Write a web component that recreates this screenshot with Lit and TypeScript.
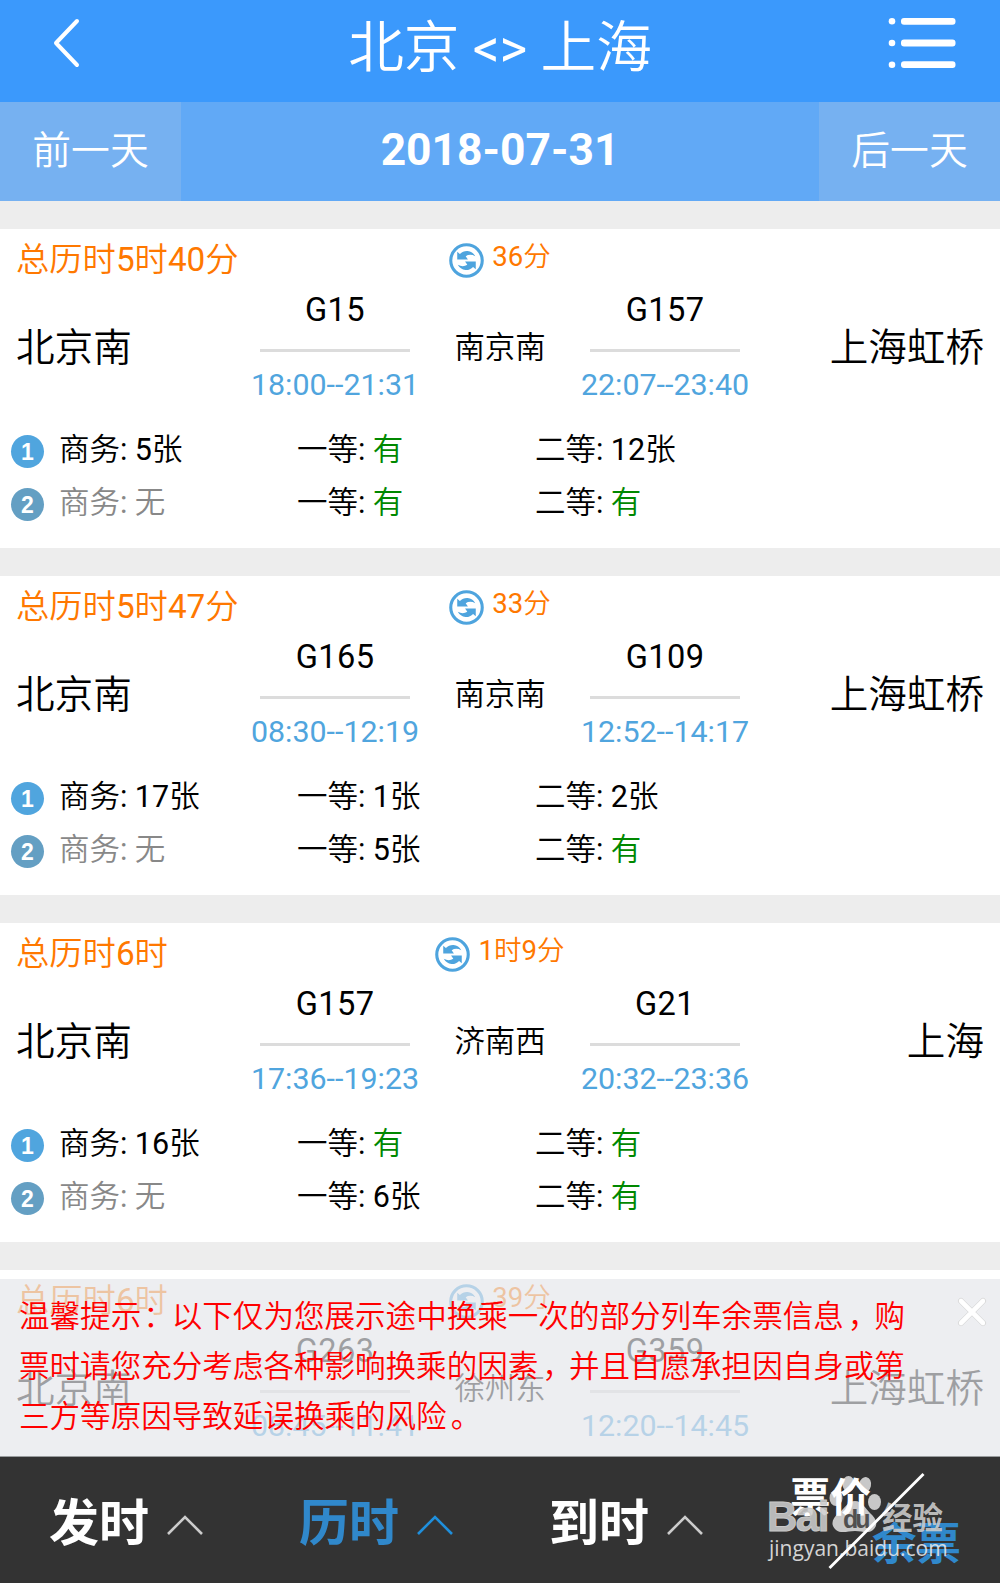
import { LitElement, html, css, svg, nothing } from "lit";
import { customElement, property } from "lit/decorators.js";
import { classMap } from "lit/directives/class-map.js";

type Leg = { train: string; time: string };
type Seats = [string, string, string];
type Trip = {
  total: string;
  wait: string;
  from: string;
  via: string;
  to: string;
  legs: [Leg, Leg];
  seats?: [Seats, Seats];
};

const TRIPS: Trip[] = [
  {
    total: "总历时5时40分", wait: "36分", from: "北京南", via: "南京南", to: "上海虹桥",
    legs: [{ train: "G15", time: "18:00--21:31" }, { train: "G157", time: "22:07--23:40" }],
    seats: [["5张", "有", "12张"], ["无", "有", "有"]],
  },
  {
    total: "总历时5时47分", wait: "33分", from: "北京南", via: "南京南", to: "上海虹桥",
    legs: [{ train: "G165", time: "08:30--12:19" }, { train: "G109", time: "12:52--14:17" }],
    seats: [["17张", "1张", "2张"], ["无", "5张", "有"]],
  },
  {
    total: "总历时6时", wait: "1时9分", from: "北京南", via: "济南西", to: "上海",
    legs: [{ train: "G157", time: "17:36--19:23" }, { train: "G21", time: "20:32--23:36" }],
    seats: [["16张", "有", "有"], ["无", "6张", "有"]],
  },
  {
    total: "总历时6时", wait: "39分", from: "北京南", via: "徐州东", to: "上海虹桥",
    legs: [{ train: "G263", time: "08:45--11:41" }, { train: "G359", time: "12:20--14:45" }],
  },
];

const SEAT_NAMES = ["商务", "一等", "二等"];

// Digits and Latin letters are set at regular weight, Chinese text at a lighter one.
const mixed = (text: string) =>
  text.split(/([\x21-\x7e]+)/).map((part, i) => (i % 2 ? html`<span class="latin">${part}</span>` : part));

@customElement("trip-card")
export class TripCard extends LitElement {
  @property({ attribute: false }) trip!: Trip;

  static styles = css`
    :host {
      display: block;
      flex: none;
      height: 319px;
      margin-bottom: 28px;
      background: #fff;
      color: #000;
      font-weight: 350;
    }
    .latin { font-weight: 400; }
    .top {
      display: grid;
      grid-template-columns: 1fr auto 1fr;
      height: 60px;
      padding: 0 16px;
      color: #ff7800;
    }
    .total { font-size: 33.3px; line-height: 60px; padding-top: 1px; }
    .wait { display: flex; align-items: center; gap: 8px; }
    .wait svg { display: block; width: 35px; height: 35px; margin-top: 1px; }
    .wait-time { font-size: 27.6px; line-height: 40px; margin-top: -6px; }
    .route {
      display: grid;
      grid-template-columns: 234px 170px 160px 170px 234px;
      height: 120px;
      padding: 0 16px;
      align-items: center;
      text-align: center;
    }
    .place { font-size: 38.6px; line-height: 60px; text-align: left; padding-bottom: 3px; white-space: nowrap; }
    .end { text-align: right; }
    .via { font-size: 30.4px; line-height: 60px; padding-bottom: 2px; }
    .leg { display: flex; flex-direction: column; align-items: center; white-space: nowrap; font-weight: 400; }
    .train { font-size: 32.6px; line-height: 40px; letter-spacing: 0.4px; margin-top: -3px; }
    .rule { width: 150px; height: 3px; margin: 19px 0 13px; background: #dcdcdc; }
    .time { font-size: 30.4px; line-height: 40px; color: #50a5de; }
    .seats {
      display: grid;
      grid-template-columns: 48px 238px 238px 238px;
      grid-auto-rows: 53px;
      padding: 14px 0 0 11px;
      align-items: center;
      font-size: 30.5px;
      line-height: 50px;
      white-space: nowrap;
    }
    .badge {
      width: 33px;
      height: 33px;
      margin-top: 3px;
      border-radius: 50%;
      background: #50a5de;
      color: #fff;
      font: 700 23px/34px "Liberation Sans", sans-serif;
      text-align: center;
    }
    .second { background: #649fc3; }
    .yes { color: #008800; }
    .none { color: #888; }
  `;

  private seat(name: string, value: string) {
    const none = value === "无";
    return html`<div class=${classMap({ none })}>${mixed(`${name}:`)} <span class=${classMap({ yes: value === "有" })}>${mixed(value)}</span></div>`;
  }

  private leg(leg: Leg) {
    return html`<div class="leg">
      <div class="train">${leg.train}</div>
      <div class="rule"></div>
      <div class="time">${leg.time}</div>
    </div>`;
  }

  render() {
    const t = this.trip;
    const arrow = "M8 8.500L10.600 10.800Q13.500 7.600 18 7.800Q23 8.300 25.500 12.800Q20.500 10.200 16.200 12.800L18.400 16L8 16Z";
    return html`
      <div class="top">
        <div class="total">${mixed(t.total)}</div>
        <div class="wait">
          <svg viewBox="0 0 34 34">
            <circle cx="17" cy="17" r="15.3" fill="none" stroke="#4ea4de" stroke-width="3" />
            <g fill="#4ea4de">
              <path d=${arrow} />
              <path d=${arrow} transform="rotate(180 17 17)" />
            </g>
          </svg>
          <div class="wait-time">${mixed(t.wait)}</div>
        </div>
      </div>
      <div class="route">
        <div class="place">${t.from}</div>
        ${this.leg(t.legs[0])}
        <div class="via">${t.via}</div>
        ${this.leg(t.legs[1])}
        <div class="place end">${t.to}</div>
      </div>
      ${t.seats
        ? html`<div class="seats">
            ${t.seats.map((row, i) => html`
              <div class=${classMap({ badge: true, second: i === 1 })}>${i + 1}</div>
              ${row.map((v, k) => this.seat(SEAT_NAMES[k], v))}
            `)}
          </div>`
        : nothing}
    `;
  }
}

@customElement("app-root")
export class AppRoot extends LitElement {
  static styles = css`
    :host {
      display: flex;
      flex-direction: column;
      width: 1000px;
      height: 1583px;
      overflow: hidden;
      background: #ededed;
      font-family: Roboto, "Noto Sans CJK SC", sans-serif;
      font-weight: 350;
    }
    .header {
      flex: none;
      display: grid;
      grid-template-columns: 150px 1fr 150px;
      align-items: center;
      height: 102px;
      background: #3b99fc;
      color: #fff;
    }
    .header svg { display: block; }
    .back { margin: 0 0 16px 52px; }
    .menu { margin: 0 44px 16px 38px; }
    .title { font-size: 55.7px; line-height: 86px; white-space: pre; text-align: center; padding-bottom: 5px; }
    .arrows { font-size: 53px; font-weight: 400; }
    .days {
      flex: none;
      display: grid;
      grid-template-columns: 181px 1fr 181px;
      height: 99px;
      background: #61a9f6;
      color: #fff;
      text-align: center;
      line-height: 97px;
    }
    .day { background: #76b1f1; font-size: 38.8px; }
    .date { font-size: 44.4px; font-weight: 700; }
    .list {
      flex: 1;
      min-height: 0;
      display: flex;
      flex-direction: column;
      padding-top: 28px;
      overflow: hidden;
    }
    .bottom { flex: none; position: relative; }
    .notice {
      position: absolute;
      left: 0;
      right: 0;
      bottom: 100%;
      box-sizing: border-box;
      height: 177px;
      padding: 13px 0 0 19px;
      display: flex;
      justify-content: space-between;
      background: rgba(229, 230, 235, 0.69);
    }
    .tip { width: 890px; font-size: 30.55px; line-height: 50px; color: #f00; white-space: nowrap; }
    .mid { margin: 0 -4px 0 4px; }
    .colon { margin: 0 -2px 0 2px; }
    .close { display: block; flex: none; width: 30px; height: 30px; margin: 5px 13px 0 0; }
    .tabs {
      display: grid;
      grid-template-columns: repeat(4, 250px);
      box-sizing: border-box;
      height: 127px;
      border-top: 1px solid #999c9e;
      background: #333;
      color: #fff;
      font-weight: 700;
    }
    .tab { display: flex; align-items: center; padding-left: 49px; gap: 18px; font-size: 50px; line-height: 126px; }
    .tab span { margin-top: 8px; line-height: 80px; }
    .tab svg { display: block; width: 36px; height: 20px; margin-top: 10px; }
    .active { color: #3088cb; }
    .toggle { position: relative; }
    .toggle svg { position: absolute; left: 0; top: 0; }
    .price, .left { position: absolute; line-height: 50px; white-space: nowrap; }
    .price { left: 40px; top: 16px; font-size: 40.5px; }
    .left { left: 122px; top: 63px; font-size: 44.5px; color: #3088cb; }
    .mark { position: absolute; line-height: 40px; color: rgba(205, 205, 205, 0.9); white-space: nowrap; }
    .bai { left: 17px; top: 40px; font: 700 42px/40px "Liberation Sans", sans-serif; letter-spacing: -1.5px; -webkit-text-stroke: 1px rgb(200, 200, 200); }
    .du { left: 93px; top: 42px; font: 700 25px/40px "Liberation Sans", sans-serif; letter-spacing: -3px; color: #505050; }
    .jing { left: 132px; top: 42px; font-size: 30.5px; }
    .site { left: 19px; top: 71px; font: 400 21px/40px "Open Sans", sans-serif; color: rgba(235, 235, 235, 0.88); }
  `;

  private caret(color: string) {
    return html`<svg viewBox="0 0 36 20"><path d="M1 19L18 2L35 19" fill="none" stroke=${color} stroke-width="2.6" /></svg>`;
  }

  render() {
    return html`
      <div class="header">
        <svg class="back" width="28" height="50" viewBox="0 0 28 50"><path d="M25 3L4 25L25 47" fill="none" stroke="#fff" stroke-width="4" stroke-linecap="round" stroke-linejoin="round" /></svg>
        <div class="title">北京<span class="arrows"> &lt;&gt; </span>上海</div>
        <svg class="menu" width="68" height="52" viewBox="0 0 68 52" fill="#fff">
          ${[4.3, 26, 47.7].map((y) => svg`<circle cx="4" cy=${y} r="3.300" /><rect x="13" y=${y - 3.4} width="54.500" height="6.800" rx="3" />`)}
        </svg>
      </div>
      <div class="days">
        <div class="day">前一天</div>
        <div class="date">2018-07-31</div>
        <div class="day">后一天</div>
      </div>
      <div class="list">${TRIPS.map((t) => html`<trip-card .trip=${t}></trip-card>`)}</div>
      <div class="bottom">
        <div class="notice">
          <div class="tip">温馨提示<span class="colon">：</span>以下仅为您展示途中换乘一次的部分列车余票信息<span class="mid">，</span>购<br />票时请您充分考虑各种影响换乘的因素<span class="mid">，</span>并且自愿承担因自身或第<br />三方等原因导致延误换乘的风险<span class="mid">。</span></div>
          <svg class="close" viewBox="0 0 30 30" fill="none" stroke-linecap="round">
            <path d="M4 4L26 26M26 4L4 26" stroke="#d4d4d4" stroke-width="6" />
            <path d="M4 4L26 26M26 4L4 26" stroke="#fff" stroke-width="4.600" />
          </svg>
        </div>
        <div class="tabs">
          <div class="tab"><span>发时</span>${this.caret("#ccc")}</div>
          <div class="tab active"><span>历时</span>${this.caret("#1f8fdc")}</div>
          <div class="tab"><span>到时</span>${this.caret("#ccc")}</div>
          <div class="toggle">
            <div class="left">余票</div>
            <svg width="250" height="126" viewBox="0 0 250 126">
              <g fill="#c8c8c8">
                <ellipse cx="86" cy="41" rx="6.500" ry="8" />
                <ellipse cx="98.500" cy="27" rx="6" ry="8" />
                <ellipse cx="115" cy="28" rx="6" ry="8" transform="rotate(12 115 28)" />
                <ellipse cx="124.500" cy="45" rx="6.500" ry="8" />
                <path d="M105 44C98 44 95 51 89 56C82 61 80 68 86 73C91 77 98 74 105 74C112 74 118 77 123 73C129 68 126 61 120 56C115 51 112 44 105 44Z" />
              </g>
            </svg>
            <div class="price">票价</div>
            <div class="mark bai">Bai</div>
            <div class="mark du">du</div>
            <div class="mark jing">经验</div>
            <div class="mark site">jingyan.baidu.com</div>
            <svg width="250" height="126" viewBox="0 0 250 126"><path d="M79.500 111L173.500 17" stroke="#fff" stroke-width="2.800" /></svg>
          </div>
        </div>
      </div>
    `;
  }
}
